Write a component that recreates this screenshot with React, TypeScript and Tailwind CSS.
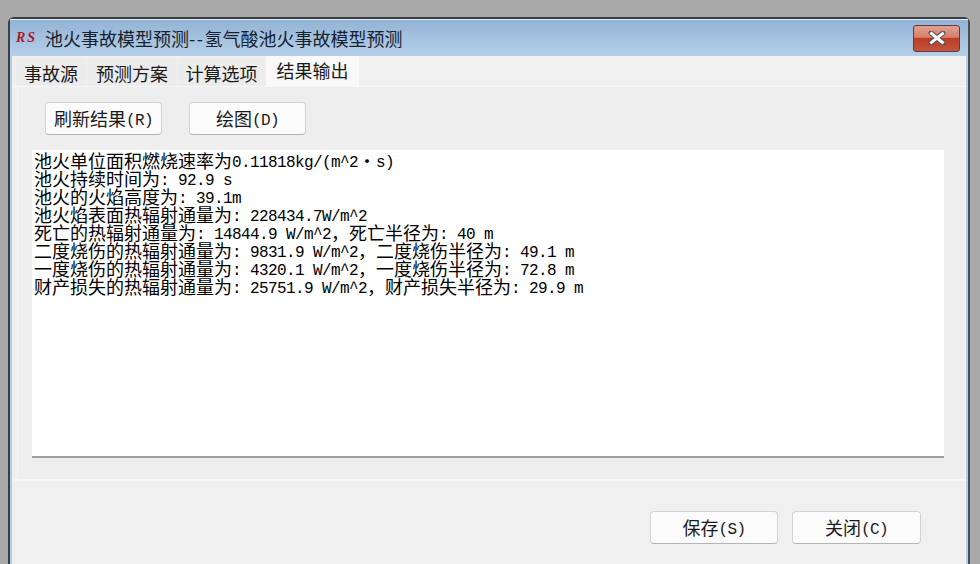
const lines = [
  "池火单位面积燃烧速率为0.11818kg/(m^2・s)",
  "池火持续时间为: 92.9 s",
  "池火的火焰高度为: 39.1m",
  "池火焰表面热辐射通量为: 228434.7W/m^2",
  "死亡的热辐射通量为: 14844.9 W/m^2\uFF0C死亡半径为: 40 m",
  "二度烧伤的热辐射通量为: 9831.9 W/m^2\uFF0C二度烧伤半径为: 49.1 m",
  "一度烧伤的热辐射通量为: 4320.1 W/m^2\uFF0C一度烧伤半径为: 72.8 m",
  "财产损失的热辐射通量为: 25751.9 W/m^2\uFF0C财产损失半径为: 29.9 m",
];

const tabs = [
  { label: "事故源", width: "w-[70px]" },
  { label: "预测方案", width: "w-[90px]" },
  { label: "计算选项", width: "w-[87px]" },
];

// SimSun look: full-width glyphs are twice the width of the latin ones
function MixedLine({ text }: { text: string }) {
  const parts = text.match(/[\u2E80-\uFFEF]+|[^\u2E80-\uFFEF]+/g) ?? [];
  return (
    <div className="h-[18px] whitespace-pre leading-[18px]">
      {parts.map((part, i) =>
        /[\u2E80-\uFFEF]/.test(part) ? (
          <span key={i} className="text-[18px] font-['Noto_Sans_CJK_SC',sans-serif]">
            {part}
          </span>
        ) : (
          <span key={i} className="align-[1px] text-[16px] tracking-[-0.6px] font-['Liberation_Mono',monospace]">
            {part}
          </span>
        )
      )}
    </div>
  );
}

function DialogButton({ label, width, height }: { label: string; width: string; height: string }) {
  return (
    <button
      className={`${width} ${height} flex items-center justify-center whitespace-pre rounded-[4px] border border-[#d3d3d3] border-b-[#b5b5b5] bg-[#fbfbfb] pb-[1px] text-[#1a1a1a]`}
    >
      <MixedLine text={label} />
    </button>
  );
}

export default function App() {
  return (
    <div className="h-[564px] w-[980px] overflow-hidden bg-[#a9a9a9] pl-[8px] pt-[17px] font-['Noto_Sans_CJK_SC',sans-serif]">
      <div className="flex h-[560px] w-[962px] flex-col rounded-t-[6px] border-2 border-b-0 border-[#3c3f42] border-r-[#4a4d50] bg-[#b4cde6]">
        {/* title bar */}
        <div className="flex h-[37px] shrink-0 items-center border-t border-[#dce8f3] bg-gradient-to-b from-[#93b4d6] to-[#b5cfe9] pl-[6px] pr-[8px]">
          <span className="w-[29px] font-['Liberation_Serif',serif] text-[14px] font-bold italic leading-none tracking-[2px] text-[#a81c24]">
            RS
          </span>
          <span className="text-[18px] leading-none text-[#17222e]">
            池火事故模型预测<span className="tracking-[1.5px]">--</span>氢气酸池火事故模型预测
          </span>
          <div className="ml-auto flex h-[27px] w-[47px] items-center justify-center rounded-[3px] border border-[#5d3a48] bg-[linear-gradient(to_bottom,#e1a08e_0%,#d5806b_45%,#bb3d24_50%,#c4543c_100%)]">
            <svg width="18" height="14" viewBox="0 0 18 14">
              <path
                d="M3 2 L15 12 M15 2 L3 12"
                stroke="#50505c"
                strokeWidth="5"
                strokeLinecap="round"
                fill="none"
              />
              <path
                d="M3.5 2.5 L14.5 11.5 M14.5 2.5 L3.5 11.5"
                stroke="#ffffff"
                strokeWidth="3"
                strokeLinecap="square"
                fill="none"
              />
            </svg>
          </div>
        </div>

        {/* client area */}
        <div className="mx-[2px] flex min-h-0 flex-1 flex-col bg-[#f0f0f0]">
          <div className="flex h-[31px] shrink-0 items-end gap-[1px] border-b border-[#f7f7f7] pl-[4px] pt-[3px]">
            {tabs.map((tab) => (
              <div
                key={tab.label}
                className={`${tab.width} flex h-[27px] items-center justify-center bg-[#ececec] text-[18px] leading-none text-[#1a1a1a]`}
              >
                {tab.label}
              </div>
            ))}
            <div className="flex h-[30px] w-[93px] items-center justify-center bg-[#f9f9f9] pb-[3px] text-[18px] leading-none text-[#1a1a1a]">
              结果输出
            </div>
          </div>

          <div className="mx-[5px] mt-0 flex h-[392px] shrink-0 flex-col border-l border-[#f6f6f6] bg-[#eeeeee] pl-[14px] pr-[13px] pt-[15px]">
            <div className="flex shrink-0 gap-[27px] pl-[13px]">
              <DialogButton label="刷新结果(R)" width="w-[117px]" height="h-[33px]" />
              <DialogButton label="绘图(D)" width="w-[117px]" height="h-[33px]" />
            </div>
            <div className="mt-[15px] h-[308px] w-[912px] border-b-2 border-[#a0a0a0] bg-white pl-[2px] pt-[1px] text-[#000000]">
              {lines.map((line) => (
                <MixedLine key={line} text={line} />
              ))}
            </div>
          </div>

          <div className="flex flex-1 items-start justify-end gap-[14px] border-t-2 border-[#f6f6f6] pr-[45px] pt-[30px]">
            <DialogButton label="保存(S)" width="w-[128px]" height="h-[33px]" />
            <DialogButton label="关闭(C)" width="w-[129px]" height="h-[33px]" />
          </div>
        </div>
      </div>
    </div>
  );
}
